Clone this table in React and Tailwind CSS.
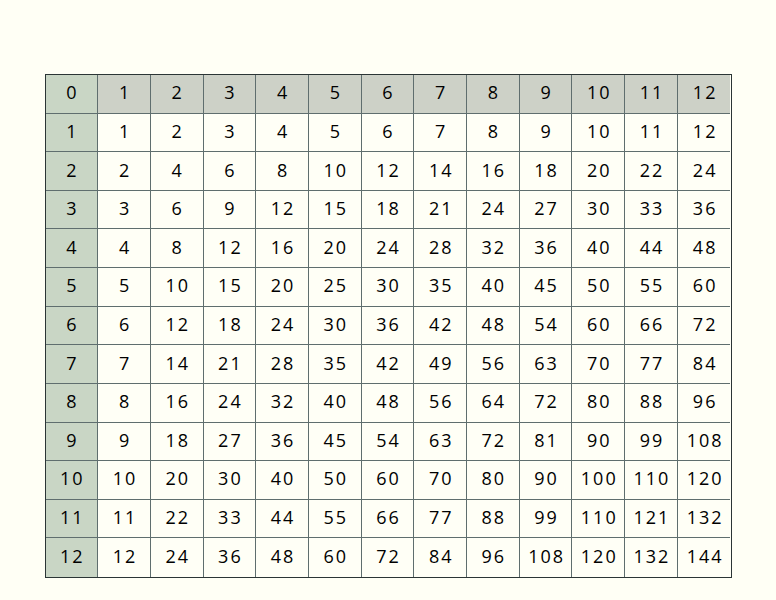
import React from 'react';

const nums = Array.from({length: 13}, (_, i) => i);

const cellClass = (row, col) => {
  let cls = 'flex items-center justify-center border-[#5f6e6e]';
  if (col < 12) cls += ' border-r';
  if (row < 12) cls += ' border-b';
  if (col === 0) cls += ' bg-[#c9d6c5]';
  else if (row === 0) cls += ' bg-[#cdd1c7]';
  else cls += ' bg-[#fffff6]';
  return cls;
};

export default function App() {
  return (
    <div className="min-h-[600px] bg-[#fffff5] pt-[74px]">
      <div className="mx-auto w-[687px] border border-[#2b3535]">
        <div className="grid h-[502px] grid-cols-13 grid-rows-13 text-[18px] tracking-[2px] text-black" style={{fontFamily: '"Open Sans", sans-serif'}}>
          {nums.map(row => nums.map(col => (
            <div key={row + '-' + col} className={cellClass(row, col)}>
              <span className="-mr-[2px] -mt-[2px]">{row === 0 ? col : col === 0 ? row : row * col}</span>
            </div>
          )))}
        </div>
      </div>
    </div>
  );
}
